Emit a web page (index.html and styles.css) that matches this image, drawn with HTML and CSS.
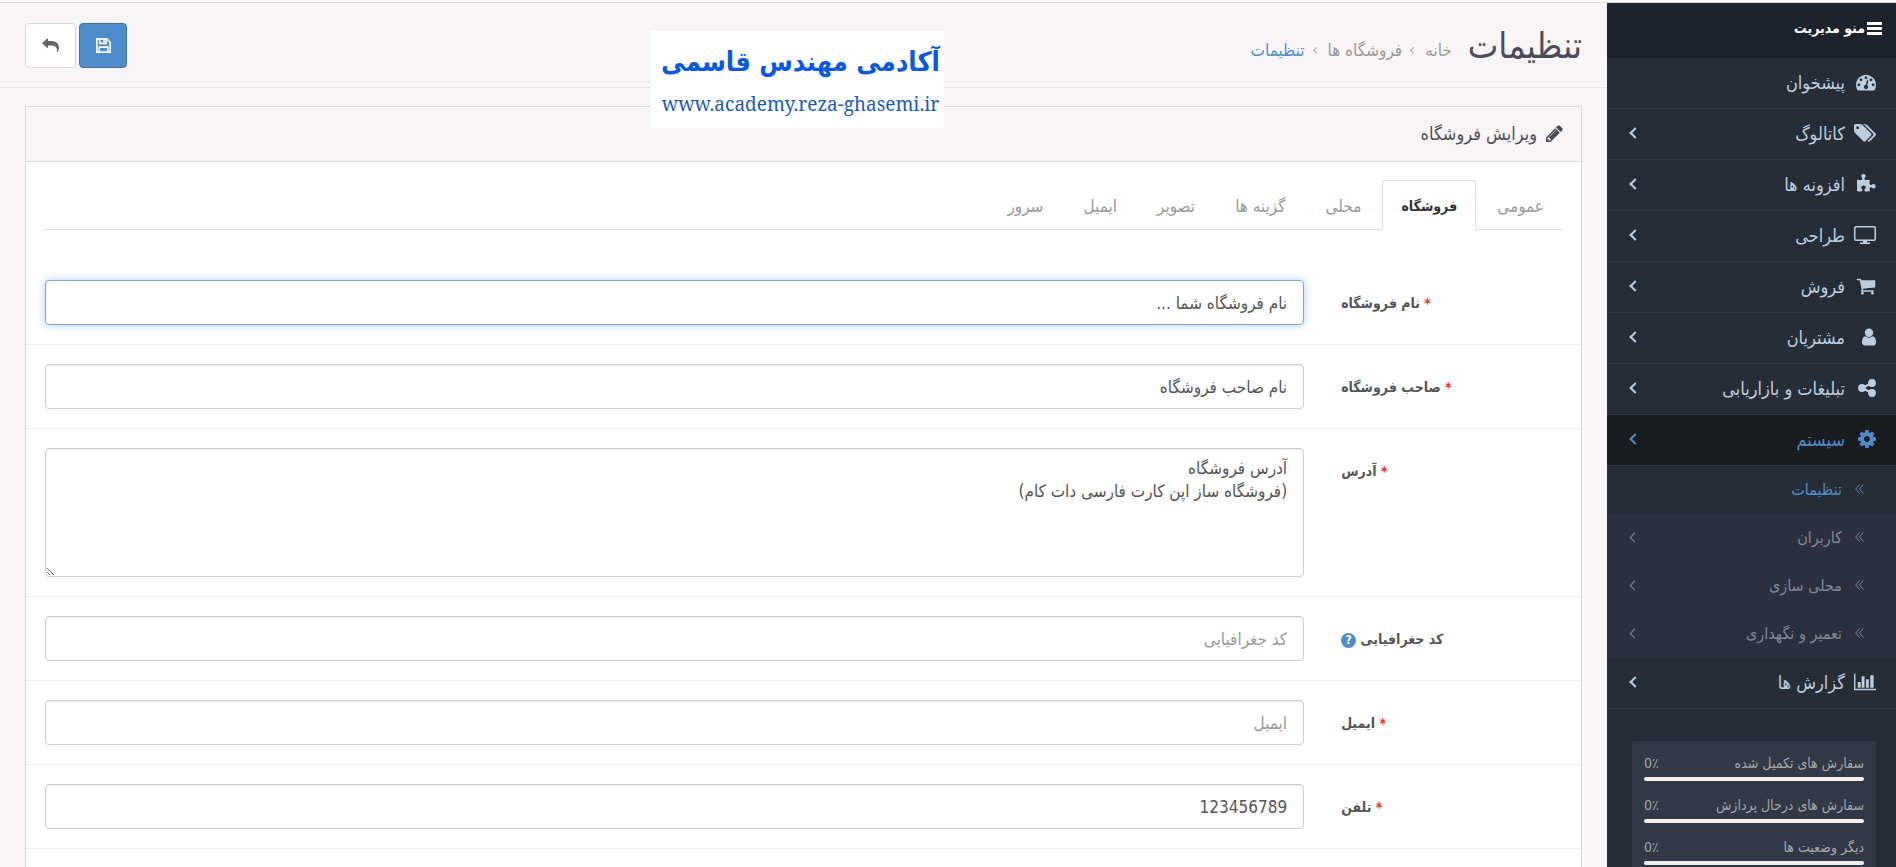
FILE: index.html
```html
<!DOCTYPE html>
<html lang="fa" dir="rtl">
<head>
  <meta charset="UTF-8">
  <title>تنظیمات</title>
  <link rel="stylesheet" href="styles.css">
</head>
<body>

<div class="page">
  <nav class="sidebar">
    <div class="menu-title">
      <svg width="15" height="14" viewBox="0 0 15 14"><path d="M0 1h15v3H0zM0 6h15v3H0zM0 11h15v3H0z"/></svg>
      <span>منو مدیریت</span>
    </div>
    <ul class="menu">
      <li><a href="#"><svg class="icon" viewBox="0 0 1792 1792"><path d="M384 1152q0-53-37.500-90.500t-90.500-37.500-90.500 37.500-37.500 90.500 37.500 90.500 90.500 37.500 90.500-37.500 37.500-90.500zm192-448q0-53-37.500-90.500t-90.500-37.500-90.500 37.500-37.500 90.500 37.500 90.500 90.500 37.500 90.500-37.500 37.500-90.500zm428 481l101-382q6-26-7.500-48.500t-38.500-29.500-48 6.500-30 39.500l-101 382q-60 5-107 43.500t-63 98.500q-20 77 20 146t117 89 146-20 89-117q16-60-6-117t-72-91zm660-33q0-53-37.500-90.500t-90.500-37.500-90.500 37.500-37.500 90.500 37.500 90.500 90.500 37.500 90.500-37.500 37.500-90.500zm-640-640q0-53-37.500-90.500t-90.500-37.500-90.500 37.500-37.500 90.500 37.500 90.500 90.500 37.500 90.500-37.500 37.500-90.500zm448 192q0-53-37.500-90.500t-90.500-37.500-90.500 37.500-37.500 90.500 37.500 90.500 90.500 37.500 90.500-37.500 37.500-90.500zm320 448q0 261-141 483-19 29-54 29h-1402q-35 0-54-29-141-221-141-483 0-182 71-348t191-286 286-191 348-71 348 71 286 191 191 286 71 348z"/></svg><span>پیشخوان</span></a></li>
      <li><a href="#" class="parent"><svg class="icon wide" viewBox="0 128 1899 1536"><path d="M448 448q0-53-37.500-90.500t-90.500-37.500-90.500 37.500-37.500 90.500 37.500 90.500 90.500 37.500 90.500-37.500 37.500-90.500zm1067 576q0 53-37 90l-491 492q-39 37-91 37-53 0-90-37l-715-716q-38-37-64.500-101t-26.500-117v-416q0-52 38-90t90-38h416q53 0 117 26.500t102 64.500l715 714q37 39 37 91zm384 0q0 53-37 90l-491 492q-39 37-91 37-36 0-59-14t-53-45l470-470q37-37 37-90 0-52-37-91l-715-714q-38-38-102-64.500t-117-26.500h224q53 0 117 26.500t102 64.500l715 714q37 39 37 91z"/></svg><span>کاتالوگ</span></a></li>
      <li><a href="#" class="parent"><svg class="icon" viewBox="0 0 1792 1792"><path d="M1755 1099q0 81-44.500 135t-123.500 54q-41 0-77.500-17.500t-59-38-56.500-38-71-17.500q-110 0-110 124 0 39 16 115t15 115v5q-22 0-33 1-34 3-97.500 11.500t-115.500 13.500-98 5q-61 0-103-26.500t-42-83.500q0-37 17.500-71t38-56.500 38-59 17.500-77.500q0-79-54-123.500t-135-44.500q-84 0-143 45.500t-59 127.500q0 43 15 83t33.500 64.500 33.500 53 15 50.500q0 45-46 89-37 35-117 35-95 0-245-24-9-2-27.500-4t-27.500-4l-13-2q-1 0-3-1-2 0-2-1v-1024q2 1 17.500 3.500t34 5 21.500 3.500q150 24 245 24 80 0 117-35 46-44 46-89 0-22-15-50.500t-33.500-53-33.500-64.500-15-83q0-82 59-127.500t144-45.500q80 0 134 44.500t54 123.500q0 41-17.500 77.500t-38 59-38 56.500-17.500 71q0 57 42 83.500t103 26.500q64 0 180-15t163-17v2q-1 2-3.500 17.500t-5 34-3.500 21.500q-24 150-24 245 0 80 35 117 44 46 89 46 22 0 50.500-15t53-33.500 64.500-33.500 83-15q82 0 127.500 59t45.500 143z"/></svg><span>افزونه ها</span></a></li>
      <li><a href="#" class="parent"><svg class="icon wide" viewBox="0 0 22 18"><path d="M2 0h18a2 2 0 0 1 2 2v11a2 2 0 0 1-2 2h-7v1.500h3V18H6v-1.500h3V15H2a2 2 0 0 1-2-2V2a2 2 0 0 1 2-2zm0 1.600a.5.500 0 0 0-.5.500v10.800c0 .300.200.500.500.500h18c.300 0 .500-.2.500-.5V2.100a.5.500 0 0 0-.5-.5z"/></svg><span>طراحی</span></a></li>
      <li><a href="#" class="parent"><svg class="icon" viewBox="0 0 1792 1792"><path d="M704 1536q0 52-38 90t-90 38-90-38-38-90 38-90 90-38 90 38 38 90zm896 0q0 52-38 90t-90 38-90-38-38-90 38-90 90-38 90 38 38 90zm128-1088v512q0 24-16.500 42.500t-40.500 21.500l-1044 122q13 60 13 70 0 16-24 64h920q26 0 45 19t19 45-19 45-45 19h-1024q-26 0-45-19t-19-45q0-11 8-31.500t16-36 21.500-40 15.500-29.500l-177-823h-204q-26 0-45-19t-19-45 19-45 45-19h256q16 0 28.500 6.500t19.500 15.500 13 24.500 8 26 5.500 29.500 4.500 26h1201q26 0 45 19t19 45z"/></svg><span>فروش</span></a></li>
      <li><a href="#" class="parent"><svg class="icon user" viewBox="256 0 1280 1792"><path d="M1536 1399q0 109-62.500 187t-150.500 78h-854q-88 0-150.500-78t-62.500-187q0-85 8.500-160.500t31.500-152 58.500-131 94-89 134.500-34.500q131 128 313 128t313-128q76 0 134.500 34.500t94 89 58.500 131 31.500 152 8.500 160.500zm-256-887q0 159-112.500 271.500t-271.500 112.500-271.500-112.500-112.500-271.500 112.500-271.500 271.500-112.500 271.500 112.500 112.500 271.500z"/></svg><span>مشتریان</span></a></li>
      <li><a href="#" class="parent"><svg class="icon small" viewBox="0 0 18 18"><path d="M14 4L4 9l10 5" fill="none" stroke="currentColor" stroke-width="2.200"/><circle cx="14" cy="4" r="3.900"/><circle cx="4" cy="9" r="3.900"/><circle cx="14" cy="14" r="3.900"/></svg><span>تبلیغات و بازاریابی</span></a></li>
      <li class="active">
        <a href="#" class="parent"><svg class="icon small" viewBox="128 128 1536 1536"><path d="M1152 896q0-106-75-181t-181-75-181 75-75 181 75 181 181 75 181-75 75-181zm512-109v222q0 12-8 23t-20 13l-185 28q-19 54-39 91 35 50 107 138 10 12 10 25t-9 23q-27 37-99 108t-94 71q-12 0-26-9l-138-108q-44 23-91 38-16 136-29 186-7 28-36 28h-222q-14 0-24.500-8.500t-11.500-21.500l-28-184q-49-16-90-37l-141 107q-10 9-25 9-14 0-25-11-126-114-165-168-7-10-7-23 0-12 8-23 15-21 51-66.500t54-70.500q-27-50-41-99l-183-27q-13-2-21-12.500t-8-23.500v-222q0-12 8-23t19-13l186-28q14-46 39-92-40-57-107-138-10-12-10-24 0-10 9-23 26-36 98.500-107.500t94.500-71.500q13 0 26 10l138 107q44-23 91-38 16-136 29-186 7-28 36-28h222q14 0 24.500 8.500t11.500 21.500l28 184q49 16 90 37l142-107q9-9 24-9 13 0 25 10 129 119 165 170 7 8 7 22 0 12-8 23-15 21-51 66.500t-54 70.500q26 50 41 98l183 28q13 2 21 12.500t8 23.500z"/></svg><span>سیستم</span></a>
        <ul class="submenu">
          <li class="current"><a href="#"><svg class="angles" viewBox="0 0 9 10"><path d="M4.500 .500L.800 5l3.700 4.500M8.300 .500L4.600 5l3.700 4.500"/></svg><span>تنظیمات</span></a></li>
          <li><a href="#" class="parent"><svg class="angles" viewBox="0 0 9 10"><path d="M4.500 .500L.800 5l3.700 4.500M8.300 .500L4.600 5l3.700 4.500"/></svg><span>کاربران</span></a></li>
          <li><a href="#" class="parent"><svg class="angles" viewBox="0 0 9 10"><path d="M4.500 .500L.800 5l3.700 4.500M8.300 .500L4.600 5l3.700 4.500"/></svg><span>محلی سازی</span></a></li>
          <li><a href="#" class="parent"><svg class="angles" viewBox="0 0 9 10"><path d="M4.500 .500L.800 5l3.700 4.500M8.300 .500L4.600 5l3.700 4.500"/></svg><span>تعمیر و نگهداری</span></a></li>
        </ul>
      </li>
      <li><a href="#" class="parent"><svg class="icon wide" viewBox="0 0 23 18"><path d="M0 0h1.500v16H23v1.500H0zM4 9h3v6H4zM8 3h3v12H8zM12.500 6h3v9h-3zM17 2h3.500v13H17z"/></svg><span>گزارش ها</span></a></li>
    </ul>
    <div class="stats">
      <div class="stat"><span>سفارش های تکمیل شده</span><span dir="ltr">0٪</span></div>
      <div class="bar"></div>
      <div class="stat"><span>سفارش های درحال پردازش</span><span dir="ltr">0٪</span></div>
      <div class="bar"></div>
      <div class="stat"><span>دیگر وضعیت ها</span><span dir="ltr">0٪</span></div>
      <div class="bar"></div>
    </div>
  </nav>

  <main class="content">
    <header class="page-header">
      <h1>تنظیمات</h1>
      <div class="breadcrumb">
        <a href="#">خانه</a><i></i><a href="#">فروشگاه ها</a><i></i><a href="#" class="here">تنظیمات</a>
      </div>
      <div class="buttons">
        <button class="btn btn-primary" type="submit" form="storeForm" aria-label="ذخیره">
          <svg class="line" width="15" height="15" viewBox="0 0 14 14"><path d="M.800 .800H10l3.200 3.200v9.200H.800zM3 13V8.500h8V13"/><path d="M3.500 1v4h6V1"/><path d="M7.500 1.500v2.500"/></svg>
        </button>
        <button class="btn" type="button" aria-label="بازگشت">
          <svg width="17" height="14" viewBox="0 0 17 14"><path d="M6 0v3h2.500c5 0 8.500 2 8.500 6.500 0 1.800-.7 3.300-1.500 4.500-.300.300-.7.100-.6-.4C15.600 9 13 7.500 8.500 7.500H6v3L.300 5.600a.6.600 0 0 1 0-.8z"/></svg>
        </button>
      </div>
    </header>

    <div class="watermark">
      <strong>آکادمی مهندس قاسمی</strong>
      <span dir="ltr">www.academy.reza-ghasemi.ir</span>
    </div>

    <section class="panel">
      <h2 class="panel-heading">
        <svg width="17" height="17" viewBox="128 128 1536 1536"><path d="M491 1536l91-91-235-235-91 91v107h128v128h107zm523-928q0-22-22-22-10 0-17 7l-542 542q-7 7-7 17 0 22 22 22 10 0 17-7l542-542q7-7 7-17zm-54-192l416 416-832 832h-416v-416zm683 96q0 53-37 90l-166 166-416-416 166-165q36-38 90-38 53 0 91 38l235 234q37 39 37 91z"/></svg>
        <span>ویرایش فروشگاه</span>
      </h2>
      <div class="tabs">
        <a href="#">عمومی</a>
        <a href="#" class="active">فروشگاه</a>
        <a href="#">محلی</a>
        <a href="#">گزینه ها</a>
        <a href="#">تصویر</a>
        <a href="#">ایمیل</a>
        <a href="#">سرور</a>
      </div>
      <form id="storeForm">
        <div class="row">
          <label for="name"><b>*</b> نام فروشگاه</label>
          <input class="focused" type="text" id="name" value="نام فروشگاه شما ...">
        </div>
        <div class="row">
          <label for="owner"><b>*</b> صاحب فروشگاه</label>
          <input type="text" id="owner" value="نام صاحب فروشگاه">
        </div>
        <div class="row">
          <label for="address"><b>*</b> آدرس</label>
          <textarea id="address">آدرس فروشگاه
(فروشگاه ساز اپن کارت فارسی دات کام)</textarea>
        </div>
        <div class="row">
          <label for="geocode">کد جغرافیایی <span class="help">?</span></label>
          <input type="text" id="geocode" placeholder="کد جغرافیایی">
        </div>
        <div class="row">
          <label for="email"><b>*</b> ایمیل</label>
          <input type="text" id="email" placeholder="ایمیل">
        </div>
        <div class="row">
          <label for="phone"><b>*</b> تلفن</label>
          <input type="text" id="phone" value="123456789">
        </div>
      </form>
    </section>
  </main>
</div>

</body>
</html>
```

FILE: styles.css
```css
*,
*::after {
  box-sizing: border-box;
}

body {
  margin: 0;
  font-family: "DejaVu Sans Condensed", "DejaVu Sans", sans-serif;
  font-size: 14px;
  color: #555;
  background: #f9f5f7;
}

a {
  color: inherit;
  text-decoration: none;
}

svg {
  fill: currentColor;
  flex: none;
}

svg.line {
  fill: none;
  stroke: currentColor;
  stroke-width: 1.5;
}

ul {
  list-style: none;
  margin: 0;
  padding: 0;
}

.page {
  display: flex;
  height: 100vh;
  padding-top: 3px;
  overflow: hidden;
  background: linear-gradient(#fff 2px, #dddadb 2px, #dddadb 3px, #f9f5f7 3px);
}

/* sidebar */
.sidebar {
  flex: 0 0 289px;
  background: #272d36;
  color: #bccde0;
}

.menu-title {
  display: flex;
  align-items: center;
  gap: 2px;
  height: 55px;
  padding: 0 14px 6px;
  background: #1e222d;
  color: #fff;
  font-weight: bold;
  font-size: 14px;
}

.menu > li > a {
  display: grid;
  grid-template-columns: 20px 1fr 8px;
  align-items: center;
  gap: 11px;
  height: 51px;
  padding: 0 20px 2px 23px;
  border-bottom: 1px solid #303541;
  font-size: 18px;
}

.icon {
  width: 20px;
  height: 20px;
}

.icon.wide {
  width: 22px;
  height: 18px;
}

.icon.small {
  width: 18px;
  height: 18px;
}

.icon.user {
  width: 14px;
}

.parent::after {
  content: "";
  width: 8px;
  height: 8px;
  margin-right: -1px;
  border-left: 2px solid;
  border-bottom: 2px solid;
  transform: rotate(45deg);
}

.menu > li.active > a {
  background: #191c1f;
  color: #4f8ccb;
}

.submenu {
  background: #2c303e;
  color: #7f8795;
}

.submenu a {
  display: grid;
  grid-template-columns: 9px 1fr 7px;
  align-items: center;
  gap: 13px;
  height: 48px;
  padding: 0 32px 2px 23px;
  font-size: 16px;
}

.submenu .parent::after {
  width: 7px;
  height: 7px;
  border-width: 1px;
}

.submenu .current {
  background: #272d36;
  color: #4f8ccb;
}

.angles {
  width: 9px;
  height: 10px;
  fill: none;
  stroke: currentColor;
}

.stats {
  margin: 32px 20px 0 25px;
  padding: 8px 12px;
  border-radius: 3px;
  background: #323845;
  color: #a5a7ac;
  font-size: 14px;
}

.stat {
  display: flex;
  justify-content: space-between;
  align-items: center;
  height: 28px;
}

.bar {
  height: 4px;
  margin-bottom: 10px;
  border-radius: 2px;
  background: #f0eeef;
}

/* header */
.content {
  position: relative;
  flex: 1;
  min-width: 0;
}

.page-header {
  display: flex;
  align-items: center;
  gap: 16px;
  height: 85px;
  padding: 0 25px;
  border-bottom: 1px solid #e9e5e7;
}

h1 {
  margin: 0;
  font-size: 36px;
  font-weight: normal;
  color: #4c4d5a;
}

.breadcrumb {
  display: flex;
  align-items: center;
  gap: 9px;
  padding-top: 10px;
  font-size: 17px;
  color: #999;
}

.breadcrumb i {
  width: 5px;
  height: 5px;
  border-left: 1px solid #aaa;
  border-bottom: 1px solid #aaa;
  transform: rotate(45deg);
}

.breadcrumb .here {
  color: #4f8ccb;
}

.buttons {
  display: flex;
  gap: 3px;
  margin-right: auto;
}

.btn {
  display: flex;
  align-items: center;
  justify-content: center;
  width: 51px;
  height: 45px;
  padding: 0;
  border: 1px solid #dcd8da;
  border-radius: 4px;
  background: #fff;
  color: #666;
}

.btn-primary {
  width: 48px;
  background: #4f8ccb;
  border-color: #3c74a9;
  color: #fff;
}

.watermark {
  position: absolute;
  top: 28px;
  left: 651px;
  width: 293px;
  height: 97px;
  padding-left: 6px;
  display: flex;
  flex-direction: column;
  align-items: center;
  justify-content: center;
  gap: 4px;
  background: #fff;
  color: #0a5ae0;
  white-space: nowrap;
}

.watermark strong {
  font-size: 27px;
  line-height: 44px;
}

.watermark span {
  font-family: "Noto Serif", "DejaVu Serif Condensed", serif;
  font-size: 19px;
  line-height: 32px;
  color: #1a5cb8;
}

/* panel */
.panel {
  margin: 18px 25px 0;
  min-height: 100%;
  border: 1px solid #dcd8da;
  background: #fff;
}

.panel-heading {
  display: flex;
  align-items: center;
  gap: 9px;
  height: 55px;
  margin: 0;
  padding: 0 18px 2px;
  border-bottom: 1px solid #dcd8da;
  background: #f9f5f7;
  color: #4c4d5a;
  font-size: 18px;
  font-weight: normal;
}

.tabs {
  display: flex;
  align-items: flex-end;
  margin: 18px 18px 31px;
  height: 50px;
  border-bottom: 1px solid #ddd;
  color: #999;
  font-size: 17px;
}

.tabs a {
  display: flex;
  align-items: center;
  height: 50px;
  padding: 2px 18px 0;
  border: 1px solid transparent;
  margin: 0 0 -1px 2px;
}

.tabs .active {
  border-color: #ddd #ddd #fff;
  border-radius: 3px 3px 0 0;
  background: #fff;
  color: #333;
  font-size: 14px;
  font-weight: bold;
}

.row {
  display: flex;
  align-items: flex-start;
  padding: 19px;
  border-bottom: 1px solid #ededed;
}

.row label {
  flex: 0 0 17%;
  padding: 13px 0 0 37px;
  text-align: left;
  font-weight: bold;
  line-height: 20px;
}

.row label b {
  color: #e0301e;
}

.help {
  display: inline-block;
  width: 15px;
  height: 15px;
  border-radius: 50%;
  background: #4f8ccb;
  color: #fff;
  font-size: 12px;
  line-height: 15px;
  text-align: center;
}

.row input,
.row textarea {
  flex: 1;
  min-width: 0;
  height: 45px;
  padding: 8px 16px;
  border: 1px solid #ccc;
  border-radius: 4px;
  background: #fff;
  box-shadow: inset 0 1px 1px rgba(0, 0, 0, 0.08);
  color: #555;
  font-family: inherit;
  font-size: 17px;
}

.row textarea {
  height: 129px;
  line-height: 23px;
}

.row input::placeholder {
  color: #999;
}

.row input.focused {
  border-color: #7da6d8;
  box-shadow: 0 0 8px rgba(102, 155, 233, 0.5);
}
```
